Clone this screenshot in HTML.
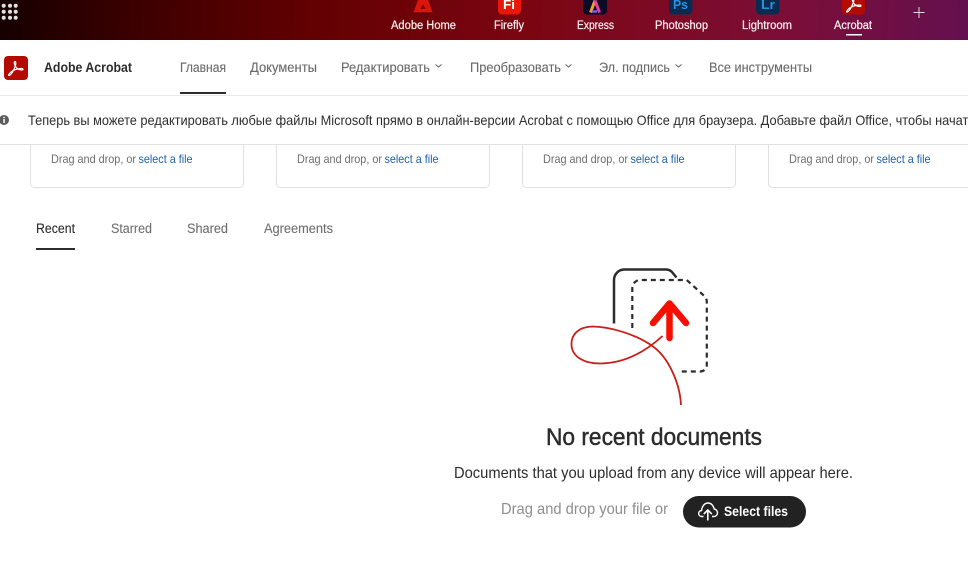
<!DOCTYPE html>
<html lang="ru"><head><meta charset="utf-8"><title>Adobe Acrobat</title>
<style>
html,body{margin:0;padding:0;background:#fff;width:968px;height:584px;overflow:hidden}
svg{display:block}
text{font-family:"Liberation Sans","Noto Sans CJK SC",sans-serif;white-space:pre}
.n{font-size:13.5px;fill:#6b6b6b;stroke:#6b6b6b;stroke-width:.12}
.t{font-size:11.5px;fill:#f6ecec;stroke:#f6ecec;stroke-width:.25}
.d{font-size:12px;fill:#6e6e6e}
.l{font-size:12px;fill:#1b62a8}
.b{font-size:13.5px;fill:#6f6f6f;stroke:#6f6f6f;stroke-width:.1}
</style></head><body>
<svg width="968" height="584" viewBox="0 0 968 584" xmlns="http://www.w3.org/2000/svg">
<defs><linearGradient id="g" gradientUnits="userSpaceOnUse" x1="0" y1="0" x2="968" y2="40">
<stop offset="0" stop-color="#160000"/><stop offset=".14" stop-color="#3c0000"/><stop offset=".32" stop-color="#620002"/><stop offset=".55" stop-color="#7b0612"/><stop offset=".8" stop-color="#7c0e36"/><stop offset="1" stop-color="#64104f"/></linearGradient></defs>
<rect width="968" height="584" fill="#fff"/>
<rect width="968" height="40" fill="url(#g)"/>
<g fill="#e2e2e2"><circle cx="3.700" cy="5.700" r="2"/><circle cx="10" cy="5.700" r="2"/><circle cx="15.700" cy="5.700" r="2"/><circle cx="3.700" cy="11.700" r="2"/><circle cx="10" cy="11.700" r="2"/><circle cx="15.700" cy="11.700" r="2"/><circle cx="3.700" cy="17.700" r="2"/><circle cx="10" cy="17.700" r="2"/><circle cx="15.700" cy="17.700" r="2"/></g>
<path fill-rule="evenodd" d="M418 0h10l4.500 12.300h-19zM423 4.500l-2.500 4.500h5z" fill="#dd1409"/>
<rect x="498" y="-10" width="23" height="24.500" rx="4" fill="#e8170a"/>
<text x="503" y="9" font-size="13" font-weight="bold" fill="#fff" textLength="12" lengthAdjust="spacingAndGlyphs">Fi</text>
<rect x="583" y="-10" width="24" height="24.500" rx="4" fill="#0d0a26"/>
<path d="M590.500 12.500l4.500-12" stroke="#f0a030" stroke-width="3" fill="none"/><path d="M595 0.500l4.500 12" stroke="#e83fa0" stroke-width="3" fill="none"/><path d="M592 11.500h5" stroke="#7c5cf0" stroke-width="2.500" fill="none"/>
<rect x="669" y="-10" width="23.500" height="24.500" rx="4" fill="#0a2b50"/>
<text x="673" y="9" font-size="13" font-weight="bold" fill="#2b90e0" textLength="15" lengthAdjust="spacingAndGlyphs">Ps</text>
<rect x="756" y="-10" width="23.500" height="24.500" rx="4" fill="#0a2b50"/>
<text x="761" y="9" font-size="13" font-weight="bold" fill="#2b90e0" textLength="14" lengthAdjust="spacingAndGlyphs">Lr</text>
<rect x="842" y="-10" width="23" height="24.500" rx="4" fill="#b30b00"/>
<path transform="translate(838 -63.500)" d="M9 75.500C11 75.500 14 70 15.500 65.500C16 63.500 16 61.500 15 61.500C14 61.500 14 63.500 15 65.500C16.500 68.500 19 70 21.500 70C23.500 70 23.500 68.500 21.500 68.500C18 68.500 13 70 10.500 72.500C9 74 8 75.500 9 75.500z" fill="none" stroke="#fff" stroke-width="1.200"/>
<text class="t" x="391" y="29" textLength="65" lengthAdjust="spacingAndGlyphs">Adobe Home</text>
<text class="t" x="494" y="29" textLength="30" lengthAdjust="spacingAndGlyphs">Firefly</text>
<text class="t" x="577" y="29" textLength="37" lengthAdjust="spacingAndGlyphs">Express</text>
<text class="t" x="655" y="29" textLength="53" lengthAdjust="spacingAndGlyphs">Photoshop</text>
<text class="t" x="742" y="29" textLength="50" lengthAdjust="spacingAndGlyphs">Lightroom</text>
<text class="t" x="834" y="29" textLength="38" lengthAdjust="spacingAndGlyphs">Acrobat</text>
<rect x="846" y="34" width="16" height="1.500" fill="#fff"/>
<path d="M919 7v11M913.500 12.500h11" stroke="#e8d4dc" stroke-width="1" fill="none"/>

<rect x="4" y="56" width="24" height="24" rx="4" fill="#b30b00"/>
<path d="M9 75.500C11 75.500 14 70 15.500 65.500C16 63.500 16 61.500 15 61.500C14 61.500 14 63.500 15 65.500C16.500 68.500 19 70 21.500 70C23.500 70 23.500 68.500 21.500 68.500C18 68.500 13 70 10.500 72.500C9 74 8 75.500 9 75.500z" fill="none" stroke="#fff" stroke-width="1.200"/>
<text x="44" y="72" font-size="13.500" font-weight="bold" fill="#2c2c2c" textLength="88" lengthAdjust="spacingAndGlyphs">Adobe Acrobat</text>
<text class="n" x="180" y="72" textLength="46" lengthAdjust="spacingAndGlyphs">Главная</text>
<text class="n" x="250" y="72" textLength="67" lengthAdjust="spacingAndGlyphs">Документы</text>
<text class="n" x="341" y="72" textLength="89" lengthAdjust="spacingAndGlyphs">Редактировать</text>
<text class="n" x="470" y="72" textLength="91" lengthAdjust="spacingAndGlyphs">Преобразовать</text>
<text class="n" x="599" y="72" textLength="71" lengthAdjust="spacingAndGlyphs">Эл. подпись</text>
<text class="n" x="709" y="72" textLength="103" lengthAdjust="spacingAndGlyphs">Все инструменты</text>
<g fill="none" stroke="#6b6b6b" stroke-width="1.100"><path d="M435.500 64.500l3 2.500 3-2.500"/><path d="M565.500 64.500l3 2.500 3-2.500"/><path d="M675.500 64.500l3 2.500 3-2.500"/></g>
<rect x="180" y="92" width="46" height="2" fill="#2c2c2c"/>
<rect x="0" y="95" width="968" height="1" fill="#e8e8e8"/>

<circle cx="4" cy="120" r="5" fill="#5c5c5c"/>
<rect x="3.300" y="119" width="1.500" height="4" fill="#fff"/><rect x="3.300" y="116.800" width="1.500" height="1.400" fill="#fff"/>
<text x="28" y="125" font-size="14" fill="#2e2e2e" textLength="947" lengthAdjust="spacingAndGlyphs">Теперь вы можете редактировать любые файлы Microsoft прямо в онлайн-версии Acrobat с помощью Office для браузера. Добавьте файл Office, чтобы начать</text>
<rect x="0" y="144" width="968" height="1" fill="#e1e1e1"/>

<g fill="none" stroke="#e0e0e0" stroke-width="1">
<path d="M30.500 145v38.500a4 4 0 0 0 4 4h205a4 4 0 0 0 4-4v-38.500"/>
<path d="M276.500 145v38.500a4 4 0 0 0 4 4h205a4 4 0 0 0 4-4v-38.500"/>
<path d="M522.500 145v38.500a4 4 0 0 0 4 4h205a4 4 0 0 0 4-4v-38.500"/>
<path d="M768.500 145v38.500a4 4 0 0 0 4 4h205.500"/>
</g>
<text class="d" x="51" y="163" textLength="85" lengthAdjust="spacingAndGlyphs">Drag and drop, or</text><text class="l" x="138.500" y="163" textLength="54" lengthAdjust="spacingAndGlyphs">select a file</text>
<text class="d" x="297" y="163" textLength="85" lengthAdjust="spacingAndGlyphs">Drag and drop, or</text><text class="l" x="384.500" y="163" textLength="54" lengthAdjust="spacingAndGlyphs">select a file</text>
<text class="d" x="543" y="163" textLength="85" lengthAdjust="spacingAndGlyphs">Drag and drop, or</text><text class="l" x="630.500" y="163" textLength="54" lengthAdjust="spacingAndGlyphs">select a file</text>
<text class="d" x="789" y="163" textLength="85" lengthAdjust="spacingAndGlyphs">Drag and drop, or</text><text class="l" x="876.500" y="163" textLength="54" lengthAdjust="spacingAndGlyphs">select a file</text>

<text x="36" y="233" font-size="13.500" fill="#2c2c2c" stroke="#2c2c2c" stroke-width=".1" textLength="39" lengthAdjust="spacingAndGlyphs">Recent</text>
<text class="b" x="111" y="233" textLength="41" lengthAdjust="spacingAndGlyphs">Starred</text>
<text class="b" x="187" y="233" textLength="41" lengthAdjust="spacingAndGlyphs">Shared</text>
<text class="b" x="264" y="233" textLength="69" lengthAdjust="spacingAndGlyphs">Agreements</text>
<rect x="36" y="248" width="39" height="2" fill="#2c2c2c"/>

<path d="M614 323.500V280a10.500 10.500 0 0 1 10-10.500h42.500a8 8 0 0 1 5 2l5 6" fill="none" stroke="#2c2c2c" stroke-width="2.500"/>
<path d="M632.300 328V288a8 8 0 0 1 8-8h46.500l17 15.500q3 3 3 6V365a6.500 6.500 0 0 1-6.500 6.500h-22" fill="none" stroke="#2c2c2c" stroke-width="2.200" stroke-dasharray="5 4"/>
<path d="M681 405C680 384 669 358 653 346.500C636 334 609 326.500 592 326.500C578 327 571 335 571.500 345C572 356 583 363.500 600 363.500C624 363.500 645 352 662.500 336" fill="none" stroke="#c9201a" stroke-width="1.800"/>
<path d="M669.500 338V304M653 323l16.500-19.500 16.500 19.500" fill="none" stroke="#f50f00" stroke-width="6.500" stroke-linecap="round" stroke-linejoin="round"/>

<text x="546" y="445" font-size="24" fill="#2c2c2c" stroke="#2c2c2c" stroke-width=".45" textLength="216" lengthAdjust="spacingAndGlyphs">No recent documents</text>
<text x="454" y="478" font-size="16" fill="#2c2c2c" textLength="399" lengthAdjust="spacingAndGlyphs">Documents that you upload from any device will appear here.</text>
<text x="501" y="514" font-size="16" fill="#8e8e8e" textLength="167" lengthAdjust="spacingAndGlyphs">Drag and drop your file or</text>
<rect x="683" y="496" width="123" height="31.500" rx="15.750" fill="#222"/>
<path d="M703.500 516.500h-1.800c-1.700 0-3-1.300-3-3s1.200-2.900 2.800-3c.4-4 3-7.500 6.500-7.500s5.500 3 6.200 6c1.800.2 3.300 2 3.300 3.900 0 2-1.500 3.600-3.500 3.600H712" fill="none" stroke="#fff" stroke-width="1.400"/>
<path d="M707.800 520.500v-10M703.800 514l4-4 4 4" fill="none" stroke="#fff" stroke-width="1.600"/>
<text x="724" y="516" font-size="13.500" font-weight="bold" fill="#fff" textLength="64" lengthAdjust="spacingAndGlyphs">Select files</text>
</svg>
</body></html>
